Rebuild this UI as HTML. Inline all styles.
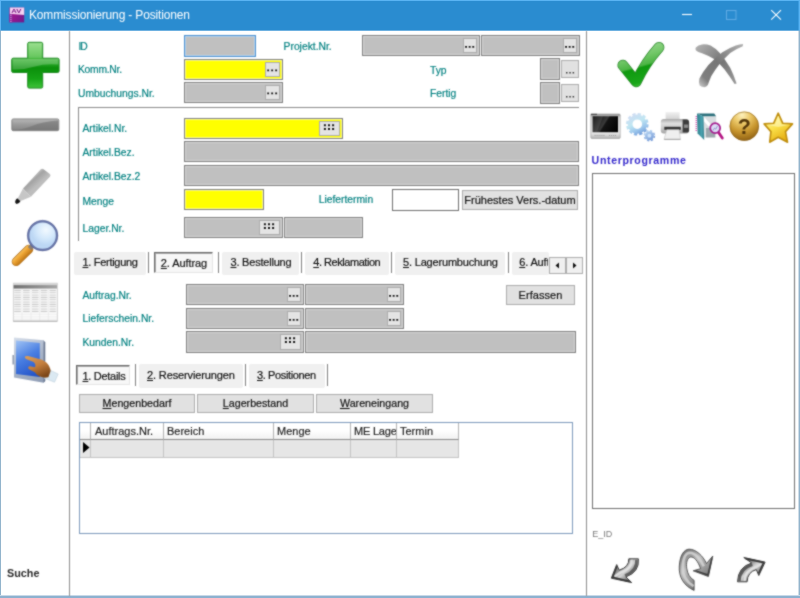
<!DOCTYPE html>
<html lang="de">
<head>
<meta charset="utf-8">
<title>Kommissionierung - Positionen</title>
<style>
*{box-sizing:border-box;margin:0;padding:0}
html,body{width:800px;height:598px;overflow:hidden;background:#fff}
body{position:relative;font-family:"Liberation Sans",sans-serif;font-size:10.3px;color:#000}
.abs,.f,.l,.t,.btn,.tab,.sep,.ln{position:absolute}
/* title */
#title{left:0;top:0;width:800px;height:30px;background:#2a8cd0}
.cap{position:absolute;left:29px;top:6.6px;font-size:12px;line-height:16px;letter-spacing:-.16px;color:#fff;white-space:nowrap}
/* labels */
.l{color:#008080;font-size:10.3px;line-height:14px;height:14px;white-space:nowrap}
.t{color:#111;font-size:11px;line-height:14px;height:14px;white-space:nowrap}
u{text-decoration:underline;text-underline-offset:1px}
/* fields */
.f{border:1px solid #808080;background:#c0c0c0;box-shadow:inset 0 0 0 1px #d6d6d6}
.f.y{background:#ffff00;box-shadow:inset 0 0 0 1px #ffff8c}
.f.w{background:#fff;box-shadow:none;border-color:#707070}
.f.foc{border-color:#4a90d0;box-shadow:inset 0 0 0 1px #b8d4ee}
.b{position:absolute;top:2px;bottom:2px;right:2px;width:15px;background:#e4e4e4;border:1px solid #adadad}
.b.w{width:21px;right:2px}
.b.n{width:14px;right:2px}
.b svg,.sb svg{display:block}
.btn{background:#e1e1e1;border:1px solid #adadad;color:#111;font-size:11px;text-align:center;white-space:nowrap}
.tab{background:#f0f0f0;border-radius:2px}
.sep{width:1px;background:#808080}
.ln{background:#8a8a8a}

.seltab{position:absolute;background:#f7f7f7;border:1px solid;border-color:#6a6a6a #e6e6e6 #e6e6e6 #6a6a6a;box-shadow:inset 1px 1px 0 #a8a8a8}
.scr{position:absolute;background:#f0f0f0;border:1px solid #adadad}
.scr svg{display:block}
.grid{position:absolute;border:1px solid #7d9abc;background:#fff;overflow:hidden}
.gh{position:absolute;top:0;height:17px;background:linear-gradient(#fff,#fff 45%,#f1f1f1);border-right:1px solid #b4b4b4;border-bottom:1px solid #8c8c8c;font-size:11px;line-height:16px;padding-left:3px;color:#222;white-space:nowrap;overflow:hidden}
.gc{position:absolute;top:17px;height:18px;background:#e6e6e6;border-right:1px solid #c4c4c4;border-bottom:1px solid #c4c4c4}
#content{position:absolute;left:0;top:0;width:800px;height:598px;filter:url(#soft)}
.l,.t,.btn,.gh{-webkit-text-stroke:.18px currentColor}
</style>
</head>
<body>
<!-- window chrome (unblurred frame) -->
<div id="title" class="abs"></div>
<div class="abs" style="left:0;top:0;width:800px;height:1px;background:#5ab4f3"></div>
<div class="abs" style="left:0;top:0;width:1px;height:30px;background:#5ab4f3"></div>
<div class="abs" style="left:799px;top:0;width:1px;height:30px;background:#5ab4f3"></div>
<div class="abs" style="left:798px;top:1px;width:1px;height:29px;background:#3d9de0"></div>
<div class="abs" style="left:0;top:30px;width:800px;height:1px;background:#6db0e0"></div>
<div class="abs" style="left:0;top:31px;width:1px;height:567px;background:#92b4cc"></div>
<div class="abs" style="left:799px;top:31px;width:1px;height:567px;background:#92b4cc"></div>
<div class="abs" style="left:798px;top:31px;width:1px;height:565px;background:#cfdde8"></div>
<div class="abs" style="left:0;top:595px;width:800px;height:1px;background:#c8d9e8"></div>
<div class="abs" style="left:0;top:596px;width:800px;height:2px;background:#8db1cf"></div>
<svg width="0" height="0" style="position:absolute"><defs><filter id="soft" x="0" y="0" width="100%" height="100%" color-interpolation-filters="sRGB"><feConvolveMatrix order="3" kernelMatrix="1 2 1 2 10 2 1 2 1" divisor="22" edgeMode="duplicate" preserveAlpha="false"/></filter></defs></svg>
<!-- window content -->
<div id="content">
<div class="cap">Kommissionierung - Positionen</div>
<div class="ln" style="left:69px;top:31px;width:1px;height:565px;background:#8c8c8c"></div>
<div class="ln" style="left:586px;top:31px;width:1px;height:565px;background:#8c8c8c"></div>
<!-- form top -->
<div class="l" style="left:78.4px;top:39.9px;letter-spacing:-.9px">ID</div>
<div class="f foc" style="left:184px;top:35px;width:72px;height:22px"></div>
<div class="l" style="left:283.6px;top:39.9px">Projekt.Nr.</div>
<div class="f " style="left:362px;top:35px;width:118px;height:21px"><span class="b n"><svg width="12" height="13" viewBox="0 0 12 13"><path d="M1.1 6.9h1.9v1.9h-1.9zM4.7 6.9h1.9v1.9h-1.9zM8.3 6.9h1.9v1.9h-1.9z" fill="#141414"/></svg></span></div>
<div class="f " style="left:481px;top:35px;width:99px;height:21px"><span class="b n"><svg width="12" height="13" viewBox="0 0 12 13"><path d="M1.1 6.9h1.9v1.9h-1.9zM4.7 6.9h1.9v1.9h-1.9zM8.3 6.9h1.9v1.9h-1.9z" fill="#141414"/></svg></span></div>
<div class="l" style="left:78px;top:62.9px;letter-spacing:-.25px">Komm.Nr.</div>
<div class="f y" style="left:184px;top:59px;width:99px;height:21px"><span class="b"><svg width="13" height="13" viewBox="0 0 13 13"><path d="M1.2 6.4h1.9v1.9h-1.9zM5.2 6.4h1.9v1.9h-1.9zM9.2 6.4h1.9v1.9h-1.9z" fill="#141414"/></svg></span></div>
<div class="l" style="left:430px;top:63.6px">Typ</div>
<div class="f " style="left:540px;top:58px;width:20px;height:22px"></div>
<div class="btn sb" style="left:561px;top:60px;width:18px;height:18px"><svg width="16" height="16" viewBox="0 0 16 16"><path d="M4 11h1.5v1.5h-1.5zM7.3 11h1.5v1.5h-1.5zM10.6 11h1.5v1.5h-1.5z" fill="#3a3a3a"/></svg></div>
<div class="l" style="left:78px;top:87.4px">Umbuchungs.Nr.</div>
<div class="f " style="left:184px;top:82px;width:99px;height:21px"><span class="b"><svg width="13" height="13" viewBox="0 0 13 13"><path d="M1.2 6.4h1.9v1.9h-1.9zM5.2 6.4h1.9v1.9h-1.9zM9.2 6.4h1.9v1.9h-1.9z" fill="#141414"/></svg></span></div>
<div class="l" style="left:430px;top:87.2px">Fertig</div>
<div class="f " style="left:540px;top:82px;width:20px;height:22px"></div>
<div class="btn sb" style="left:561px;top:84px;width:18px;height:18px"><svg width="16" height="16" viewBox="0 0 16 16"><path d="M4 11h1.5v1.5h-1.5zM7.3 11h1.5v1.5h-1.5zM10.6 11h1.5v1.5h-1.5z" fill="#3a3a3a"/></svg></div>
<!-- group box -->
<div class="ln" style="left:78px;top:107px;width:501px;height:1px"></div>
<div class="ln" style="left:78px;top:107px;width:1px;height:134px"></div>
<div class="l" style="left:82.5px;top:122.4px">Artikel.Nr.</div>
<div class="f y" style="left:184px;top:118px;width:159px;height:21px"><span class="b w"><svg width="19" height="13" viewBox="0 0 19 13"><path d="M3.9 2.35h2v2h-2zM8 2.35h2v2h-2zM12.1 2.35h2v2h-2zM3.9 6.05h2v2h-2zM8 6.05h2v2h-2zM12.1 6.05h2v2h-2z" fill="#141414"/></svg></span></div>
<div class="l" style="left:82.5px;top:145.9px">Artikel.Bez.</div>
<div class="f " style="left:184px;top:141px;width:395px;height:21px"></div>
<div class="l" style="left:82.5px;top:169.9px">Artikel.Bez.2</div>
<div class="f " style="left:184px;top:165px;width:395px;height:21px"></div>
<div class="l" style="left:82.5px;top:194.8px">Menge</div>
<div class="f y" style="left:184px;top:189px;width:80px;height:21px"></div>
<div class="l" style="left:318.75px;top:193.4px">Liefertermin</div>
<div class="f w" style="left:392px;top:189px;width:67px;height:22px"></div>
<div class="btn" style="left:462px;top:190px;width:116px;height:20px;line-height:18px;font-size:11px">Frühestes Vers.-datum</div>
<div class="l" style="left:82.5px;top:221.9px">Lager.Nr.</div>
<div class="f " style="left:184px;top:217px;width:99px;height:21px"><span class="b w"><svg width="19" height="13" viewBox="0 0 19 13"><path d="M3.9 2.35h2v2h-2zM8 2.35h2v2h-2zM12.1 2.35h2v2h-2zM3.9 6.05h2v2h-2zM8 6.05h2v2h-2zM12.1 6.05h2v2h-2z" fill="#141414"/></svg></span></div>
<div class="f " style="left:284px;top:217px;width:79px;height:21px"></div>
<!-- main tabs -->
<div class="tab" style="left:74px;top:252px;width:72px;height:23px"></div>
<div class="t" style="left:82.5px;top:255.4px;letter-spacing:-.3px"><u>1</u>. Fertigung</div>
<div class="sep" style="left:148px;top:252px;height:21px"></div>
<div class="seltab" style="left:154px;top:252px;width:59px;height:21px"></div>
<div class="t" style="left:160.8px;top:256.4px;letter-spacing:-.08px"><u>2</u>. Auftrag</div>
<div class="sep" style="left:218px;top:252px;height:21px"></div>
<div class="tab" style="left:222px;top:252px;width:77px;height:23px"></div>
<div class="t" style="left:230.5px;top:255.4px;letter-spacing:-.21px"><u>3</u>. Bestellung</div>
<div class="sep" style="left:301px;top:252px;height:21px"></div>
<div class="tab" style="left:305px;top:252px;width:84px;height:23px"></div>
<div class="t" style="left:313.25px;top:255.4px;letter-spacing:-.46px"><u>4</u>. Reklamation</div>
<div class="sep" style="left:391px;top:252px;height:21px"></div>
<div class="tab" style="left:395px;top:252px;width:110px;height:23px"></div>
<div class="t" style="left:403px;top:255.4px;letter-spacing:-.18px"><u>5</u>. Lagerumbuchung</div>
<div class="sep" style="left:508px;top:252px;height:21px"></div>
<div class="tab" style="left:512px;top:252px;width:37px;height:23px"></div>
<div class="t" style="left:519.25px;top:255.4px;width:28.5px;overflow:hidden;letter-spacing:-.15px"><u>6</u>. Auftrag</div>
<div class="scr" style="left:549px;top:257px;width:17px;height:17px"><svg width="15" height="15" viewBox="0 0 15 15"><path d="M9 4.5 L5.5 7.5 L9 10.5Z" fill="#111"/></svg></div>
<div class="scr" style="left:566px;top:257px;width:17px;height:17px"><svg width="15" height="15" viewBox="0 0 15 15"><path d="M6 4.5 L9.5 7.5 L6 10.5Z" fill="#111"/></svg></div>
<!-- Auftrag page -->
<div class="l" style="left:82.5px;top:288.7px">Auftrag.Nr.</div>
<div class="f " style="left:186px;top:284px;width:118px;height:21px"><span class="b n"><svg width="12" height="13" viewBox="0 0 12 13"><path d="M1.1 6.9h1.9v1.9h-1.9zM4.7 6.9h1.9v1.9h-1.9zM8.3 6.9h1.9v1.9h-1.9z" fill="#141414"/></svg></span></div>
<div class="f " style="left:305px;top:284px;width:99px;height:21px"><span class="b n"><svg width="12" height="13" viewBox="0 0 12 13"><path d="M1.1 6.9h1.9v1.9h-1.9zM4.7 6.9h1.9v1.9h-1.9zM8.3 6.9h1.9v1.9h-1.9z" fill="#141414"/></svg></span></div>
<div class="btn" style="left:506px;top:285px;width:69px;height:20px;line-height:18px;font-size:11px;letter-spacing:.05px">Erfassen</div>
<div class="l" style="left:82.5px;top:312.4px">Lieferschein.Nr.</div>
<div class="f " style="left:186px;top:308px;width:118px;height:21px"><span class="b n"><svg width="12" height="13" viewBox="0 0 12 13"><path d="M1.1 6.9h1.9v1.9h-1.9zM4.7 6.9h1.9v1.9h-1.9zM8.3 6.9h1.9v1.9h-1.9z" fill="#141414"/></svg></span></div>
<div class="f " style="left:305px;top:308px;width:99px;height:21px"><span class="b n"><svg width="12" height="13" viewBox="0 0 12 13"><path d="M1.1 6.9h1.9v1.9h-1.9zM4.7 6.9h1.9v1.9h-1.9zM8.3 6.9h1.9v1.9h-1.9z" fill="#141414"/></svg></span></div>
<div class="l" style="left:82.5px;top:336.1px">Kunden.Nr.</div>
<div class="f " style="left:186px;top:331px;width:118px;height:22px"><span class="b w"><svg width="19" height="13" viewBox="0 0 19 13"><path d="M3.9 2.35h2v2h-2zM8 2.35h2v2h-2zM12.1 2.35h2v2h-2zM3.9 6.05h2v2h-2zM8 6.05h2v2h-2zM12.1 6.05h2v2h-2z" fill="#141414"/></svg></span></div>
<div class="f " style="left:305px;top:331px;width:271px;height:22px"></div>
<!-- sub tabs -->
<div class="seltab" style="left:76px;top:365px;width:54px;height:20px"></div>
<div class="t" style="left:82.5px;top:369.2px;letter-spacing:-.3px"><u>1</u>. Details</div>
<div class="sep" style="left:135px;top:364px;height:22px"></div>
<div class="tab" style="left:139px;top:364px;width:104px;height:24px"></div>
<div class="t" style="left:147px;top:368.2px;letter-spacing:-.12px"><u>2</u>. Reservierungen</div>
<div class="sep" style="left:245px;top:364px;height:22px"></div>
<div class="tab" style="left:249px;top:364px;width:76px;height:24px"></div>
<div class="t" style="left:257px;top:368.2px;letter-spacing:-.37px"><u>3</u>. Positionen</div>
<div class="sep" style="left:327px;top:364px;height:22px"></div>
<div class="btn" style="left:79px;top:394px;width:116px;height:19px;line-height:17px;font-size:10.7px"><u>M</u>engenbedarf</div>
<div class="btn" style="left:197px;top:394px;width:117px;height:19px;line-height:17px;font-size:10.7px"><u>L</u>agerbestand</div>
<div class="btn" style="left:316px;top:394px;width:117px;height:19px;line-height:17px;font-size:10.7px"><u>W</u>areneingang</div>
<!-- grid -->
<div class="grid" style="left:79px;top:422px;width:494px;height:112px">
<div class="gh" style="left:0px;width:11px"></div><div class="gh" style="left:11px;width:73px;padding-left:4px">Auftrags.Nr.</div><div class="gh" style="left:84px;width:110px">Bereich</div><div class="gh" style="left:194px;width:77px">Menge</div><div class="gh" style="left:271px;width:46px;letter-spacing:-.2px">ME Lage</div><div class="gh" style="left:317px;width:62px">Termin</div>
<div class="gc" style="left:0px;width:11px"></div><div class="gc" style="left:11px;width:73px"></div><div class="gc" style="left:84px;width:110px"></div><div class="gc" style="left:194px;width:77px"></div><div class="gc" style="left:271px;width:46px"></div><div class="gc" style="left:317px;width:62px"></div>
<svg class="abs" style="left:2px;top:18px" width="8" height="13" viewBox="0 0 8 13"><path d="M1 1 L7.5 6.5 L1 12Z" fill="#000"/></svg>
</div>
<!-- right panel -->
<div class="abs" style="left:591.6px;top:153.4px;font-size:10.6px;line-height:14px;font-weight:bold;color:#3428cc;letter-spacing:.64px;white-space:nowrap">Unterprogramme</div>
<div class="abs" style="left:592px;top:173px;width:203px;height:336px;border:1px solid #707070;background:#fff"></div>
<div class="abs" style="left:592.2px;top:527.5px;font-size:9px;line-height:12px;color:#7a7a7a;white-space:nowrap">E_ID</div>
<div class="abs" style="left:7px;top:565.5px;font-size:10.8px;line-height:14px;font-weight:bold;color:#2a2a2a;white-space:nowrap">Suche</div>
<!-- window buttons -->
<svg class="abs" style="left:660px;top:0" width="140" height="30" viewBox="0 0 140 30">
<path d="M22 14.5H32" stroke="#fff" stroke-width="1.1" fill="none"/>
<rect x="66.5" y="10.5" width="9.5" height="9" stroke="#62acE4" stroke-width="1" fill="none"/>
<path d="M111.2 10.2 L121 19.7 M121 10.2 L111.2 19.7" stroke="#fff" stroke-width="1.1" fill="none"/>
</svg>
<!-- app icon -->
<svg class="abs" style="left:9px;top:7px" width="16" height="16" viewBox="0 0 16 16">
<defs><linearGradient id="gApp" x1="3" y1="7" x2="15" y2="15" gradientUnits="userSpaceOnUse"><stop offset="0" stop-color="#a3178f"/><stop offset="1" stop-color="#6e1c8c"/></linearGradient></defs>
<rect x="0.4" y="0.6" width="14.8" height="14.8" fill="url(#gApp)"/>
<path d="M0.9 0.6H15.2V8L3.4 7.1H0.9Z" fill="#f6d2f1"/>
<rect x="0.4" y="7.1" width="3" height="8.3" fill="#8a2a9c"/>
<path d="M1.9 7.8V15" stroke="#e7a6df" stroke-width="1.1" stroke-dasharray="1.1 1"/>
<text transform="translate(2.2,5.6) scale(1.42,1)" font-family="Liberation Sans, sans-serif" font-size="5.4" font-weight="bold" fill="#7a1684">AV</text>
</svg>
<!-- left toolbar icons -->
<svg class="abs" style="left:0;top:30px" width="69" height="566" viewBox="0 30 69 566">
<defs>
<linearGradient id="gPlus" x1="0" y1="42" x2="0" y2="88" gradientUnits="userSpaceOnUse">
<stop offset="0" stop-color="#8fdc82"/><stop offset=".3" stop-color="#58c24e"/><stop offset=".5" stop-color="#1d9f1d"/><stop offset=".56" stop-color="#0b8f0b"/><stop offset=".8" stop-color="#16a316"/><stop offset="1" stop-color="#3fc43a"/>
</linearGradient>
<linearGradient id="gMinus" x1="0" y1="118.7" x2="0" y2="130.7" gradientUnits="userSpaceOnUse">
<stop offset="0" stop-color="#b9b9b9"/><stop offset=".5" stop-color="#9a9a9a"/><stop offset="1" stop-color="#858585"/>
</linearGradient>
<linearGradient id="gPen" x1="30" y1="176" x2="38" y2="185" gradientUnits="userSpaceOnUse">
<stop offset="0" stop-color="#cfcfcf"/><stop offset=".45" stop-color="#a3a3a3"/><stop offset="1" stop-color="#bdbdbd"/>
</linearGradient>
<radialGradient id="gLens" cx="46" cy="230" r="15" gradientUnits="userSpaceOnUse">
<stop offset="0" stop-color="#f2f9ff"/><stop offset=".6" stop-color="#d3e8fb"/><stop offset="1" stop-color="#bcd7f4"/>
</radialGradient>
<linearGradient id="gHandle" x1="18" y1="251" x2="25" y2="258" gradientUnits="userSpaceOnUse">
<stop offset="0" stop-color="#ffd77a"/><stop offset=".5" stop-color="#efa838"/><stop offset="1" stop-color="#c47a16"/>
</linearGradient>
<linearGradient id="gHead" x1="13" y1="0" x2="57" y2="0" gradientUnits="userSpaceOnUse">
<stop offset="0" stop-color="#6e6e6e"/><stop offset="1" stop-color="#a6a6a6"/>
</linearGradient>
<pattern id="pRows" x="13.3" y="289.3" width="8.8" height="2.33" patternUnits="userSpaceOnUse">
<rect x="1" y=".6" width="6.6" height="1" fill="#c6c6c6"/>
</pattern>
<linearGradient id="gScreen" x1="17" y1="341" x2="38" y2="376" gradientUnits="userSpaceOnUse">
<stop offset="0" stop-color="#9cc0f4"/><stop offset=".45" stop-color="#4a7fe2"/><stop offset="1" stop-color="#1f4fc6"/>
</linearGradient>
<linearGradient id="gFrame" x1="14" y1="338" x2="44" y2="382" gradientUnits="userSpaceOnUse">
<stop offset="0" stop-color="#d6deea"/><stop offset=".5" stop-color="#aab6ca"/><stop offset="1" stop-color="#8d9bb3"/>
</linearGradient>
<linearGradient id="gHand" x1="30" y1="356" x2="40" y2="378" gradientUnits="userSpaceOnUse">
<stop offset="0" stop-color="#d89a58"/><stop offset=".5" stop-color="#c27d3c"/><stop offset="1" stop-color="#7c4718"/>
</linearGradient>
</defs>
<!-- plus -->
<path d="M29.2 42.3H41.2Q42.7 42.3 42.7 43.8V58.2H57.6Q59.1 58.2 59.1 59.7V71Q59.1 72.5 57.6 72.5H42.7V86.6Q42.7 88.1 41.2 88.1H29.2Q27.7 88.1 27.7 86.6V72.5H13.2Q11.7 72.5 11.7 71V59.7Q11.7 58.2 13.2 58.2H27.7V43.8Q27.7 42.3 29.2 42.3Z" fill="url(#gPlus)" stroke="#1e8a22" stroke-width="1"/>
<path d="M12.5 59H58.3V64.5Q45 63.2 35 66.5Q24 70 12.5 69.5Z" fill="#fff" opacity=".22"/>
<path d="M28.5 43H41.9V58H28.5Z" fill="#fff" opacity=".12"/>
<!-- minus -->
<rect x="11.8" y="118.9" width="47" height="11.8" rx="1.5" fill="url(#gMinus)" stroke="#787878" stroke-width=".8"/>
<path d="M12.5 129.8Q24 129.5 32 126Q42 121.5 58 120.5V129.2Q58 130 57 130H13.2Q12.5 130 12.5 129.8Z" fill="#6d6d6d" opacity=".55"/>
<!-- pen -->
<path d="M23 188.4L40.6 169.5Q42 168 43.6 169.2L49.8 174Q51.2 175.2 49.9 176.7L30.9 196.8Z" fill="url(#gPen)"/>
<path d="M23 188.4L30.9 196.8L19.5 201.6L17.2 199.4Z" fill="#c6c6c6"/>
<path d="M17.2 198.2L20.4 201.2Q19.5 203.6 16.6 203.9Q14.8 203.2 15.2 201.2Q15.8 199 17.2 198.2Z" fill="#151515"/>
<!-- magnifier -->
<path d="M28.8 249.2L16.2 261.6" stroke="#b47420" stroke-width="9" stroke-linecap="round"/>
<path d="M28.8 249.2L16.2 261.6" stroke="url(#gHandle)" stroke-width="7.4" stroke-linecap="round"/>
<path d="M33.5 244.5L29.6 248.6" stroke="#8f7f70" stroke-width="5"/>
<circle cx="42.6" cy="235.6" r="14.3" fill="url(#gLens)" stroke="#6a78aa" stroke-width="2.2"/>
<circle cx="42.6" cy="235.6" r="15.3" fill="none" stroke="#44508a" stroke-width=".6" opacity=".7"/>
<!-- table -->
<rect x="13.3" y="283.2" width="44" height="38" fill="#fcfcfc" stroke="#c9c9c9" stroke-width=".8"/>
<rect x="13.3" y="283.2" width="44" height="2" fill="#d4d4d4"/>
<rect x="13.6" y="285.1" width="43.4" height="3.5" fill="url(#gHead)"/>
<rect x="13.3" y="289.3" width="44" height="23.3" fill="url(#pRows)"/>
<path d="M13.3 314.2H57.3M13.3 316.8H57.3M13.3 319.2H57.3M22 289V321M31 289V321M39.7 289V321M48.4 289V321" stroke="#e4e4e4" stroke-width=".6" fill="none"/>
<path d="M13.3 321.2H57.3" stroke="#a8a8a8" stroke-width=".9"/>
<!-- tablet + hand -->
<path d="M12.4 355H14.2V364.5H12.4Z" fill="#98a2b4"/>
<path d="M14 337.5L43.6 340.3L45.2 342.6V381L43.6 382.7L14 377.6Z" fill="url(#gFrame)"/>
<path d="M43.6 340.3L45.2 342.6V381L43.6 382.7Z" fill="#6b7890"/>
<path d="M16 340.5L39.8 343V377.1L16 374.1Z" fill="url(#gScreen)"/>
<path d="M46.5 368.5L58.2 374L54.6 382.2L44 378.2Z" fill="#dbe9f2" stroke="#b7cad8" stroke-width=".5"/>
<path d="M25 356.6Q26 355.5 28 356.1L36.5 358.2Q42.5 359.2 46.4 362.4Q50.2 366 50.6 371L48.4 377.2Q44 378.3 40 376.6Q36.6 375.2 34.8 372.2L29.6 369.4Q27.5 368.4 28.3 367Q29.2 366 31.2 366.5L35 367.3Q36.2 364.6 33.6 362L26 358.9Q24.2 358 25 356.6Z" fill="url(#gHand)"/>
</svg>
<!-- right panel icons -->
<svg class="abs" style="left:587px;top:30px" width="212" height="120" viewBox="587 30 212 120">
<defs>
<linearGradient id="gChk" x1="634" y1="41" x2="646.7" y2="88" gradientUnits="userSpaceOnUse">
<stop offset="0" stop-color="#a4dc9a"/><stop offset=".33" stop-color="#74c86a"/><stop offset=".525" stop-color="#4db545"/><stop offset=".565" stop-color="#0f990f"/><stop offset=".85" stop-color="#1aa61a"/><stop offset="1" stop-color="#55d848"/>
</linearGradient>
<linearGradient id="gX" x1="696" y1="44" x2="740" y2="86" gradientUnits="userSpaceOnUse">
<stop offset="0" stop-color="#b4b4b4"/><stop offset=".5" stop-color="#747474"/><stop offset="1" stop-color="#a0a0a0"/>
</linearGradient>
<linearGradient id="gX2" x1="742" y1="44" x2="700" y2="86" gradientUnits="userSpaceOnUse">
<stop offset="0" stop-color="#b0b0b0"/><stop offset=".5" stop-color="#767676"/><stop offset=".85" stop-color="#7e7e7e"/><stop offset="1" stop-color="#c4c4c4"/>
</linearGradient>
<linearGradient id="gMonF" x1="0" y1="114" x2="0" y2="138.5" gradientUnits="userSpaceOnUse">
<stop offset="0" stop-color="#8c8c8c"/><stop offset=".15" stop-color="#d8d8d8"/><stop offset=".8" stop-color="#e4e4e4"/><stop offset="1" stop-color="#b0b0b0"/>
</linearGradient>
<linearGradient id="gMonS" x1="593" y1="116" x2="618" y2="132" gradientUnits="userSpaceOnUse">
<stop offset="0" stop-color="#050505"/><stop offset=".45" stop-color="#3a3a3a"/><stop offset=".5" stop-color="#141414"/><stop offset="1" stop-color="#000"/>
</linearGradient>
<linearGradient id="gGear" x1="630" y1="113" x2="642" y2="136" gradientUnits="userSpaceOnUse">
<stop offset="0" stop-color="#d3daf3"/><stop offset=".45" stop-color="#bfe6f2"/><stop offset=".72" stop-color="#9cc6ec"/><stop offset="1" stop-color="#628ed2"/>
</linearGradient>
<linearGradient id="gGear2" x1="645" y1="130" x2="653" y2="142" gradientUnits="userSpaceOnUse">
<stop offset="0" stop-color="#c0dcf6"/><stop offset="1" stop-color="#6f95d4"/>
</linearGradient>
<linearGradient id="gPrn" x1="0" y1="119" x2="0" y2="133.5" gradientUnits="userSpaceOnUse">
<stop offset="0" stop-color="#a8a8a8"/><stop offset=".3" stop-color="#dedede"/><stop offset=".6" stop-color="#cdcdcd"/><stop offset="1" stop-color="#a2a2a2"/>
</linearGradient>
<linearGradient id="gPap" x1="0" y1="112" x2="0" y2="120" gradientUnits="userSpaceOnUse">
<stop offset="0" stop-color="#f1f1f1"/><stop offset="1" stop-color="#cfcfcf"/>
</linearGradient>
<linearGradient id="gBook" x1="697" y1="0" x2="705" y2="0" gradientUnits="userSpaceOnUse">
<stop offset="0" stop-color="#2f7f8c"/><stop offset=".6" stop-color="#4aa3b0"/><stop offset="1" stop-color="#2d7480"/>
</linearGradient>
<radialGradient id="gHelp" cx="742" cy="115" r="27" gradientUnits="userSpaceOnUse">
<stop offset="0" stop-color="#fdf1bd"/><stop offset=".3" stop-color="#ecc96a"/><stop offset=".62" stop-color="#c8962e"/><stop offset="1" stop-color="#8a5b10"/>
</radialGradient>
<linearGradient id="gStar" x1="770" y1="113" x2="786" y2="143" gradientUnits="userSpaceOnUse">
<stop offset="0" stop-color="#fff8ac"/><stop offset=".45" stop-color="#fae04a"/><stop offset="1" stop-color="#e0a204"/>
</linearGradient>
</defs>
<!-- check -->
<path d="M622.8 65.2L636.2 81.8Q645.5 62.5 659 47.4" fill="none" stroke="#2f8a2f" stroke-width="10.8" stroke-linecap="round" stroke-linejoin="round"/>
<path d="M622.8 65.2L636.2 81.8Q645.5 62.5 659 47.4" fill="none" stroke="url(#gChk)" stroke-width="9.4" stroke-linecap="round" stroke-linejoin="round"/>
<!-- X -->
<path d="M695.8 47.4Q698 45 702 44.4Q706.5 44 710.6 45.4Q715.2 47.8 719.6 52.8Q725.2 59.6 730.2 67.8Q733.8 75 736.6 83.6L734.6 84Q730.6 77.4 724.6 69.4Q719.2 63.2 713.6 58.8Q707.6 55.2 702 53.2Q697.6 52 696 50.4Q695 49 695.8 47.4Z" fill="url(#gX)"/>
<path d="M743 44L742.8 46.2Q736.2 48.8 730.2 53Q724.6 58 719.2 64.6Q714.6 70.6 711.2 76.2Q709.2 81 707.8 85Q706.6 87 704.4 87.2Q701.6 87.2 699.6 85.6Q698.2 83 699.4 78.6Q702.6 72 708.4 65Q714.8 58.2 722 52.4Q729.2 48 735.8 45.6Q739.6 44.4 743 44Z" fill="url(#gX2)"/>
<!-- monitor -->
<rect x="590.8" y="114" width="29.4" height="24.5" rx="1" fill="url(#gMonF)" stroke="#9a9a9a" stroke-width=".6"/>
<rect x="592.6" y="116.2" width="25.4" height="16" fill="url(#gMonS)"/>
<path d="M592.6 116.2H603L597 132.2H592.6Z" fill="#fff" opacity=".1"/>
<path d="M594.5 135.4H605M609 135.4H616" stroke="#9a9a9a" stroke-width="1" stroke-dasharray="1.2 .8"/>
<path d="M590.8 114.3H597" stroke="#222" stroke-width=".8"/>
<!-- gears -->
<circle cx="637.3" cy="124.2" r="10.2" fill="none" stroke="url(#gGear)" stroke-width="2.2" stroke-dasharray="3.3 2.04"/>
<circle cx="637.3" cy="124.2" r="7.2" fill="none" stroke="url(#gGear)" stroke-width="4.8"/>
<circle cx="649.4" cy="135.7" r="5" fill="none" stroke="url(#gGear2)" stroke-width="1.6" stroke-dasharray="2.2 1.73"/>
<circle cx="649.4" cy="135.7" r="3.2" fill="#cfe4fa" stroke="url(#gGear2)" stroke-width="2.6"/>
<!-- printer -->
<path d="M665.6 112.1H679.6V120H665.6Z" fill="url(#gPap)"/>
<rect x="660.8" y="119.1" width="28.3" height="14.4" rx="3" fill="url(#gPrn)"/>
<path d="M682.6 119.4H686.3Q689.1 119.6 689.1 122.4V130.2Q689.1 132.6 686.5 132.6H682.6Z" fill="#3c3c3c"/>
<rect x="684" y="124.5" width="4.2" height="3.4" fill="#8c8c8c"/>
<rect x="664.3" y="126.8" width="16.5" height="3" fill="#353535"/>
<path d="M666.8 129.7H679L680.5 139.5H664Z" fill="#efefef" stroke="#c2c2c2" stroke-width=".6"/>
<path d="M664.2 139.3H680.4" stroke="#9c9c9c" stroke-width=".9"/>
<!-- book + magnifier -->
<path d="M697 113.6H714.2L716.2 116.4H703.5Z" fill="#2b6f7b"/>
<path d="M703.3 116.4H716.2V137.6H704Z" fill="#d9dde0"/>
<path d="M703.6 116.6L712 125.5L708.5 126.5L703.8 121Z" fill="#fff"/>
<path d="M706 128H715V137.4H706Z" fill="#9da8ad"/>
<path d="M697 113.6L703.5 116.6L704.2 140L697.6 133.4Z" fill="url(#gBook)"/>
<path d="M696.2 116V131.5" stroke="#d13fa4" stroke-width="1.3" stroke-dasharray="1 1"/>
<path d="M718.6 132.4L722.3 138" stroke="#b41683" stroke-width="2.8" stroke-linecap="round"/>
<circle cx="715.2" cy="128.1" r="5" fill="#dcdcf6" stroke="#a6208f" stroke-width="1.7"/>
<path d="M713 130.5L714.6 128L715.8 129.2L717.4 126" stroke="#8b8fc2" stroke-width=".9" fill="none"/>
<!-- help -->
<circle cx="744.3" cy="126.2" r="14.6" fill="url(#gHelp)"/>
<circle cx="744.3" cy="126.2" r="14.3" fill="none" stroke="#86601a" stroke-width=".7" opacity=".8"/>
<text x="744.4" y="134" text-anchor="middle" font-family="Liberation Sans, sans-serif" font-weight="bold" font-size="21.5" fill="#55380a">?</text>
<!-- star -->
<path d="M778.2 113.2L782.7 123.2L792.5 123.9L785.5 131.6L787.5 142.2L778.2 137.2L769.7 142.2L770.9 131.6L764.1 123.9L773.7 123.2Z" fill="url(#gStar)" stroke="#c08f10" stroke-width="1.6" stroke-linejoin="round"/>
<path d="M778.2 115.8L781.5 124.2L789.6 124.8L778.2 127L767 124.8L774.9 124.2Z" fill="#fffbd0" opacity=".5"/>
</svg>
<!-- bottom arrows -->
<svg class="abs" style="left:600px;top:545px" width="190" height="50" viewBox="600 545 190 50">
<defs>
<linearGradient id="gA1" x1="622" y1="566" x2="634" y2="578" gradientUnits="userSpaceOnUse">
<stop offset="0" stop-color="#8a8a8a"/><stop offset=".35" stop-color="#d6d6d6"/><stop offset=".7" stop-color="#8c8c8c"/><stop offset="1" stop-color="#4a4a4a"/>
</linearGradient>
<linearGradient id="gA2" x1="680" y1="552" x2="708" y2="584" gradientUnits="userSpaceOnUse">
<stop offset="0" stop-color="#6a6a6a"/><stop offset=".4" stop-color="#c2c2c2"/><stop offset=".75" stop-color="#8a8a8a"/><stop offset="1" stop-color="#5a5a5a"/>
</linearGradient>
<linearGradient id="gA3" x1="740" y1="562" x2="752" y2="576" gradientUnits="userSpaceOnUse">
<stop offset="0" stop-color="#4a4a4a"/><stop offset=".4" stop-color="#8c8c8c"/><stop offset=".7" stop-color="#d6d6d6"/><stop offset="1" stop-color="#9a9a9a"/>
</linearGradient>
</defs>
<path d="M628.8 558.8L638.4 558.8Q639.6 572 625.9 576.9L631.7 582.6L611.3 578.2L616.7 564.6L619.2 570.2Q629.2 567 628.8 558.8Z" fill="url(#gA1)" stroke="#3f3f3f" stroke-width="1" stroke-linejoin="round"/>
<path d="M694.1 590.4C684 586 678.5 577 679.3 566C680 555 684 549.4 689 549.2C696 549 703 556 706.5 563.5L712.8 556L708.4 576.5L693.2 570.8L700.6 568.7C698 561 694 556.5 690.6 557C687 558 686 563 686.7 568.2C687.5 574 690 578 694.1 580.4Z" fill="url(#gA2)" stroke="#4a4a4a" stroke-width=".9" stroke-linejoin="round"/>
<path d="M737.5 581.8Q738 567 751.7 563L743.8 557.5L765.1 562.1L758.8 575.5L756.3 569.6Q747.5 572 747.1 581.8Z" fill="url(#gA3)" stroke="#3f3f3f" stroke-width="1" stroke-linejoin="round"/>
<path d="M636.4 559.6Q637.4 570.8 625 575.4" fill="none" stroke="#555" stroke-width="2.6" opacity=".85"/>
<path d="M631.6 559.6Q632.2 568.6 621 572.2L614.5 576.6" fill="none" stroke="#e2e2e2" stroke-width="2.4" opacity=".9"/>
<path d="M616.9 566.2L612.6 577.4L629.5 581.4" fill="none" stroke="#3a3a3a" stroke-width="1.6" stroke-linejoin="round"/>
<path d="M739.4 581Q739.9 568.4 752.4 564.8" fill="none" stroke="#4d4d4d" stroke-width="2.6" opacity=".85"/>
<path d="M744.6 581Q745 570.6 755.6 567.4L761.5 564" fill="none" stroke="#e2e2e2" stroke-width="2.4" opacity=".9"/>
<path d="M745.6 558.6L763.6 562.6L758.6 573.6" fill="none" stroke="#3a3a3a" stroke-width="1.6" stroke-linejoin="round"/>
<path d="M693.6 586.2C686 581.6 682.4 574.4 682.8 566.4C683.2 558 686 553 689.8 552.8C695 552.8 700.6 559.4 703.8 566.2" fill="none" stroke="#d6d6d6" stroke-width="2.6" opacity=".8"/>
<path d="M711.8 558.4L708 575L695.4 570.6" fill="none" stroke="#3f3f3f" stroke-width="1.5" stroke-linejoin="round"/>

</svg>
</div>
</body>
</html>
